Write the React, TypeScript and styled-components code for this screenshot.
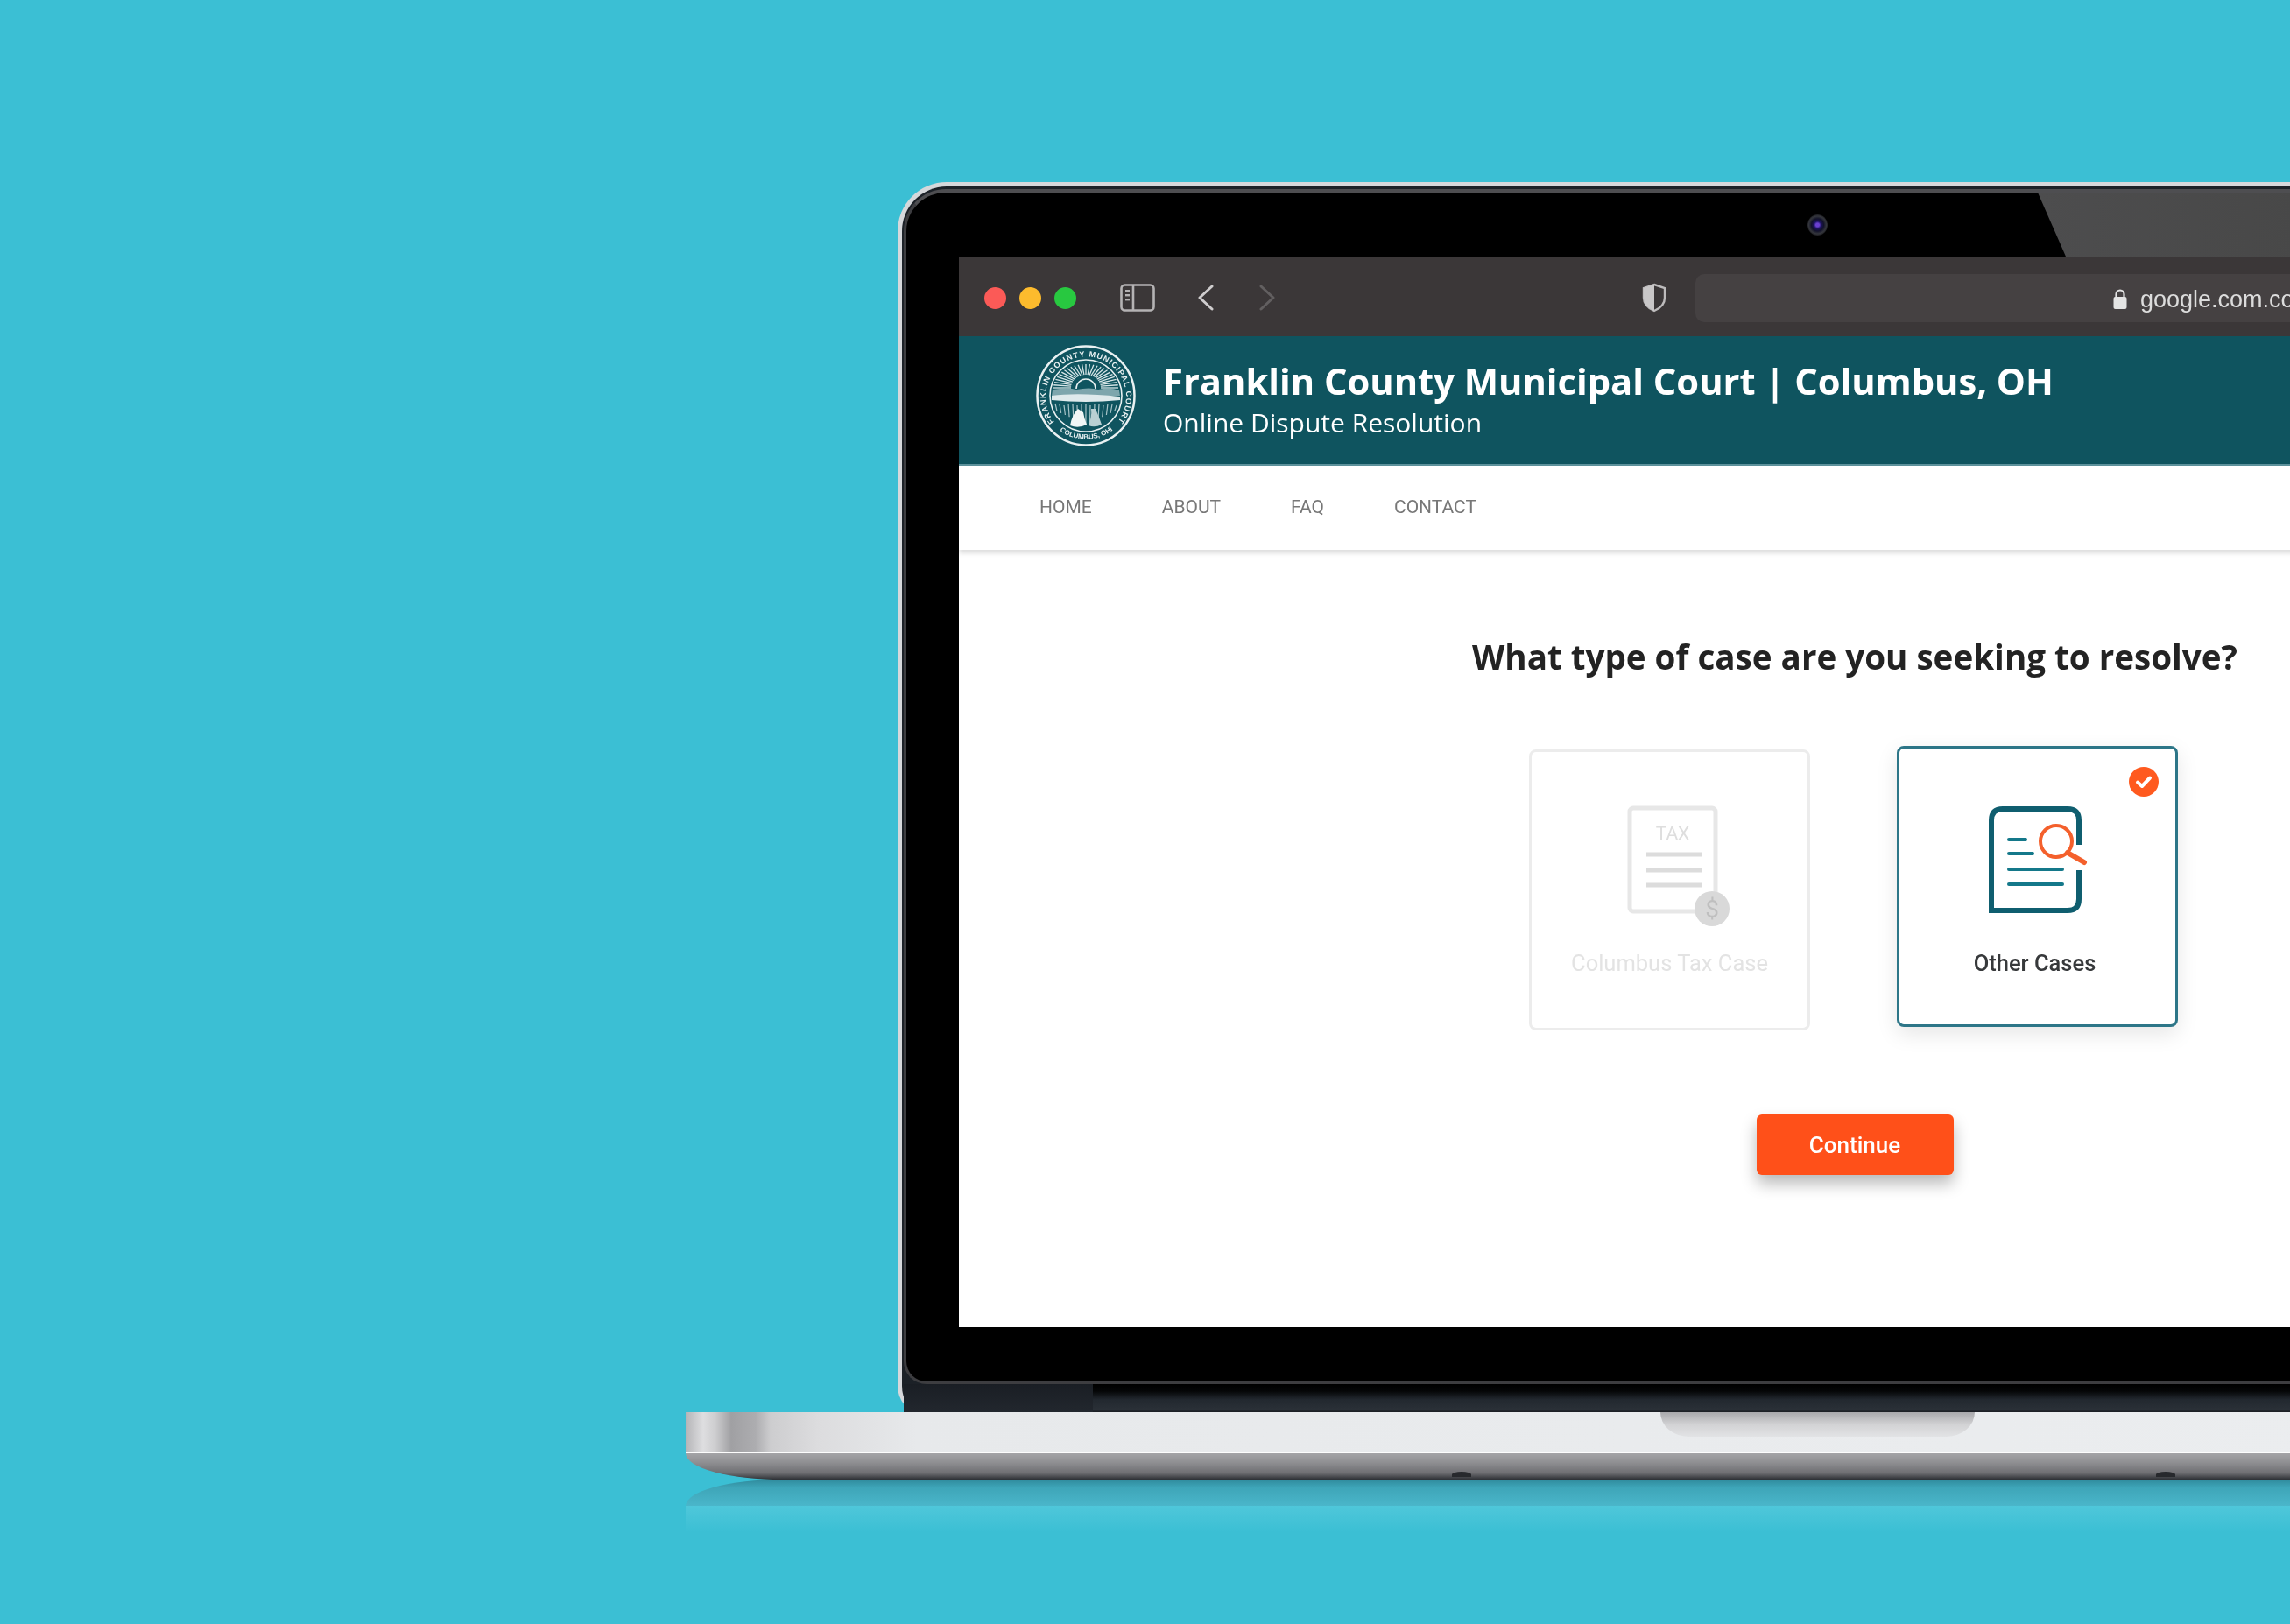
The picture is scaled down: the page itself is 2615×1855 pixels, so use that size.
import React from "react";
import styled, { createGlobalStyle } from "styled-components";

const Global = createGlobalStyle`
  html, body { margin: 0; padding: 0; background: #3bbfd4; }
  * { box-sizing: border-box; }
`;

const Page = styled.main`
  width: 2615px;
  height: 1855px;
  overflow: hidden;
  background: #3bbfd4;
  padding: 208px 0 0 783px;
  display: flex;
  flex-direction: column;
  align-items: flex-start;
`;

const Lid = styled.section`
  flex: none;
  width: 2300px;
  margin-left: 242px;
  background: #1c2127;
  border: solid #d6d8db;
  border-width: 5px 0 0 5px;
  border-radius: 56px 0 0 26px / 56px 0 0 30px;
  padding: 3px 0 0 2px;
  display: flex;
  flex-direction: column;
`;

const Bezel = styled.div`
  position: relative;
  background: #000;
  border: solid #3d3d40;
  border-width: 4px 0 3px 3px;
  border-top-color: #4e4e51;
  border-radius: 48px 0 0 26px;
  padding: 73px 0 62px 60px;
`;

const Wedge = styled.div`
  position: absolute;
  top: 0;
  left: 1292px;
  width: 1000px;
  height: 73px;
  background: linear-gradient(90deg, #4d4d4e, #484848 30%, #434343);
  clip-path: polygon(0 0, 100% 0, 100% 100%, 32px 100%);
`;

const Camera = styled.div`
  position: absolute;
  left: 1029px;
  top: 25px;
  width: 23px;
  height: 24px;
  border-radius: 50%;
  background: radial-gradient(circle, #6a3fd0 0 2px, #1d1464 4px, #12122a 7px, #34363c 10px, #1c1c20 12px);
`;

const Hinge = styled.div`
  height: 32px;
  display: flex;
`;

const HingeLeft = styled.div`
  width: 216px;
  background: linear-gradient(#1a1e24, #22272e);
`;

const HingeRight = styled.div`
  flex: 1;
  background: linear-gradient(#000 0, #050607 25%, #22282f 55%, #2a3037 90%, #1a1d22 100%);
`;

const Screen = styled.div`
  width: 2046px;
  height: 1223px;
  background: #fff;
  display: flex;
  flex-direction: column;
  filter: blur(0.5px);
`;

const Toolbar = styled.header`
  flex: none;
  height: 91px;
  background: #3b3738;
  display: flex;
  align-items: center;
  padding-left: 29px;
`;

const Light = styled.span<{ $c: string }>`
  flex: none;
  width: 25px;
  height: 25px;
  border-radius: 50%;
  margin-right: 15px;
  margin-top: 3px;
  background: ${(p) => p.$c};
`;

const ToolIcon = styled.svg<{ $ml: number }>`
  flex: none;
  margin-left: ${(p) => p.$ml}px;
  margin-top: 3px;
`;

const UrlBar = styled.div`
  flex: none;
  width: 1300px;
  height: 55px;
  margin: 4px 0 0 33px;
  border-radius: 10px;
  background: #454142;
  display: flex;
  align-items: center;
  gap: 15px;
  padding-left: 477px;
  color: #dcdcdc;
  font: 500 27px "Liberation Sans", Arial, sans-serif;
`;

const UrlText = styled.span`
  padding-top: 3px;
  white-space: nowrap;
`;

const Banner = styled.div`
  flex: none;
  height: 148px;
  background: #0f545f;
  border-bottom: 2px solid #5d929c;
  display: flex;
  align-items: center;
  padding: 0 0 0 88px;
  gap: 31px;
  color: #fff;
  font-family: "Open Sans", "Noto Sans", sans-serif;
`;

const BannerText = styled.div`
  display: flex;
  flex-direction: column;
  padding-bottom: 4px;
`;

const CourtName = styled.div`
  font-size: 41.7px;
  font-weight: 700;
  line-height: 55px;
  white-space: nowrap;
`;

const CourtSub = styled.div`
  font-size: 30px;
  font-weight: 500;
  line-height: 42px;
  white-space: nowrap;
`;

const Nav = styled.nav`
  flex: none;
  height: 96px;
  display: flex;
  align-items: center;
  gap: 80px;
  padding: 0 0 2px 92px;
  box-shadow: 0 4px 5px rgba(0, 0, 0, 0.13);
  position: relative;
`;

const NavLink = styled.a`
  font: 400 21px Roboto, "Liberation Sans", sans-serif;
  color: #777;
`;

const Body = styled.div`
  flex: 1;
  display: flex;
  flex-direction: column;
  align-items: center;
  padding-top: 94px;
`;

const Question = styled.h1`
  margin: 0 0 74px;
  font: 700 38.6px/56px "Open Sans", "Noto Sans", sans-serif;
  color: #232323;
  white-space: nowrap;
`;

const Choices = styled.div`
  display: flex;
  align-items: flex-start;
  gap: 99px;
  margin-right: 3px;
`;

const Card = styled.button<{ $on?: boolean }>`
  position: relative;
  width: 321px;
  height: 321px;
  margin-top: ${(p) => (p.$on ? 0 : 4)}px;
  background: #fff;
  border: 3px solid ${(p) => (p.$on ? "#2d7688" : "#ececec")};
  border-radius: 8px;
  box-shadow: ${(p) => (p.$on ? "0 8px 24px rgba(0,0,0,.1)" : "none")};
  display: flex;
  flex-direction: column;
  align-items: center;
  padding: ${(p) => (p.$on ? 65 : 61)}px 0 0;
  font-family: Roboto, "Liberation Sans", sans-serif;
`;

const CardLabel = styled.span<{ $on?: boolean }>`
  position: absolute;
  left: 0;
  right: ${(p) => (p.$on ? 6 : 0)}px;
  top: ${(p) => (p.$on ? 229 : 225)}px;
  text-align: center;
  font-size: 25.5px;
  font-weight: ${(p) => (p.$on ? 500 : 400)};
  line-height: 32px;
  color: ${(p) => (p.$on ? "#37393b" : "#e3e3e3")};
`;

const Badge = styled.svg`
  position: absolute;
  top: 20px;
  right: 18px;
`;

const Continue = styled.button`
  margin-top: 96px;
  width: 225px;
  height: 69px;
  border: 0;
  border-radius: 6px;
  background: #ff5019;
  color: #fff;
  font: 500 26px Roboto, "Liberation Sans", sans-serif;
  box-shadow: 0 10px 18px rgba(0, 0, 0, 0.28);
`;

const Base = styled.div`
  flex: none;
  width: 2300px;
  height: 47px;
  display: flex;
  padding-left: 1113px;
  border-bottom: 2px solid #fdfdfd;
  background: linear-gradient(
    90deg,
    #b4b4b7 0,
    #dedee0 20px,
    #cdcdcf 34px,
    #a0a0a3 52px,
    #adadb0 80px,
    #cdcdcf 97px,
    #dcdcde 150px,
    #e7e9eb 264px,
    #eceef0 100%
  );
`;

const Notch = styled.div`
  width: 359px;
  height: 28px;
  border-radius: 0 0 32px 32px / 0 0 28px 28px;
  background: linear-gradient(#a8a8ab, #d2d2d4 50%, #e2e3e5);
`;

const Lip = styled.div`
  position: relative;
  flex: none;
  width: 2300px;
  height: 30px;
  border-radius: 0 0 0 110px / 0 0 0 30px;
  background: linear-gradient(#a4a4a7, #8f8f92 35%, #6e6e72 75%, #2d3035 100%);
`;

const Foot = styled.span<{ $x: number }>`
  position: absolute;
  left: ${(p) => p.$x}px;
  bottom: 3px;
  width: 22px;
  height: 6px;
  border-radius: 50% 50% 0 0;
  background: #27292d;
`;

const ReflectionTop = styled.div`
  flex: none;
  width: 2300px;
  height: 30px;
  border-radius: 110px 0 0 0 / 30px 0 0 0;
  background: linear-gradient(#2f8a9c, #3ea5b8 30%, #4ab6ca 100%);
`;

const ReflectionFade = styled.div`
  flex: none;
  width: 2300px;
  height: 30px;
  background: linear-gradient(#4fc7da, #3bbfd4);
`;

const SealMark = styled.svg`
  flex: none;
  margin-bottom: 10px;
`;

const DocIcon = styled.svg<{ $shift: number }>`
  flex: none;
  margin-left: ${(p) => p.$shift}px;
`;

const Seal = () => (
  <SealMark width="114" height="116" viewBox="-57 -58 114 116">
    <defs>
      <path id="sealTop" d="M -36 30 A 46 46 0 1 1 36 30" />
      <path id="sealBottom" d="M -30 40 A 51 51 0 0 0 30 40" />
    </defs>
    <ellipse cx="0" cy="0" rx="55.5" ry="56.5" fill="none" stroke="#e9f1f2" strokeWidth="2.5" />
    <circle cx="0" cy="0" r="41" fill="none" stroke="#e9f1f2" strokeWidth="1.6" />
    <text fill="#e9f1f2" fontFamily="Liberation Sans, sans-serif" fontWeight="700" fontSize="9" textLength="205">
      <textPath href="#sealTop">FRANKLIN COUNTY MUNICIPAL COURT</textPath>
    </text>
    <text fill="#e9f1f2" fontFamily="Liberation Sans, sans-serif" fontWeight="700" fontSize="8">
      <textPath href="#sealBottom">COLUMBUS, OHIO</textPath>
    </text>
    <g stroke="#d8e6e8" strokeWidth="1.3">
      {Array.from({ length: 27 }).map((_, i) => {
        const a = Math.PI + (i * Math.PI) / 26;
        return (
          <line
            key={i}
            x1={Math.cos(a) * 17}
            y1={-9 + Math.sin(a) * 15}
            x2={Math.cos(a) * 37}
            y2={-9 + Math.sin(a) * 27}
          />
        );
      })}
    </g>
    <path d="M -11 -8 A 11 11 0 0 1 11 -8" fill="none" stroke="#e9f1f2" strokeWidth="1.6" />
    <path d="M -38 -7 Q -20 -10 -11 -7 Q 5 -10 14 -7 Q 28 -10 38 -6 L 39 0 L -39 0 Z" fill="#7ea6ad" />
    <path d="M -39 0 Q -10 -4 39 1 L 39 5 Q 0 9 -39 5 Z" fill="#dfeaec" />
    <g stroke="#a9c5c9" strokeWidth="1.2">
      {Array.from({ length: 15 }).map((_, i) => (
        <line key={i} x1={-35 + i * 5} y1={9 + (i % 3)} x2={-33 + i * 4.7} y2={33 - Math.abs(i - 7) * 2.2} />
      ))}
    </g>
    <path d="M -18 34 Q -16 22 -9 15 L -3 19 Q -2 26 1 33 Q -9 38 -18 34 Z" fill="#f1f6f6" />
    <path d="M 3 34 Q 7 24 6 15 L 11 15 Q 15 24 18 33 Q 10 37 3 34 Z" fill="#b9d0d3" />
  </SealMark>
);

const OtherDoc = () => (
  <DocIcon width="124" height="125" viewBox="0 0 124 125" fill="none" $shift={6}>
    <path
      d="M 106 45 V 17 Q 106 4 93 4 H 19 Q 6 4 6 17 V 120 H 93 Q 106 120 106 107 V 74"
      stroke="#0f5e6f"
      strokeWidth="6"
    />
    <g stroke="#14788a" strokeWidth="4" strokeLinecap="round">
      <line x1="26" y1="39" x2="45" y2="39" />
      <line x1="26" y1="55" x2="53" y2="55" />
      <line x1="26" y1="73" x2="87" y2="73" />
      <line x1="26" y1="90" x2="87" y2="90" />
    </g>
    <circle cx="80" cy="41" r="18" stroke="#f4602c" strokeWidth="4" />
    <line x1="93" y1="54" x2="112" y2="65" stroke="#f4602c" strokeWidth="6" strokeLinecap="round" />
  </DocIcon>
);

const TaxDoc = () => (
  <DocIcon width="124" height="145" viewBox="0 0 124 145" fill="none" $shift={27}>
    <rect x="3" y="3" width="98" height="118" rx="4" stroke="#e7e7e7" strokeWidth="5" />
    <text x="52" y="39" textAnchor="middle" fill="#dedede" fontSize="21" fontFamily="Roboto, sans-serif">
      TAX
    </text>
    <g stroke="#dcdcdc" strokeWidth="5">
      <line x1="22" y1="56" x2="85" y2="56" />
      <line x1="22" y1="74" x2="85" y2="74" />
      <line x1="22" y1="91" x2="85" y2="91" />
    </g>
    <circle cx="97" cy="118" r="20" fill="#d9d9d9" />
    <text x="97" y="128" textAnchor="middle" fill="#bfbfbf" fontSize="28" fontFamily="Roboto, sans-serif">
      $
    </text>
  </DocIcon>
);

export default function App() {
  return (
    <Page>
      <Global />
      <Lid>
        <Bezel>
          <Wedge />
          <Camera />
          <Screen>
            <Toolbar>
              <Light $c="#fb5a57" />
              <Light $c="#fdbb2d" />
              <Light $c="#28c840" />
              <ToolIcon $ml={35} width="40" height="32" viewBox="0 0 40 32" fill="none">
                <rect x="1.5" y="1.5" width="37" height="29" rx="4" stroke="#b5b3b4" strokeWidth="2.6" />
                <line x1="15" y1="2" x2="15" y2="30" stroke="#b5b3b4" strokeWidth="2.6" />
                <g fill="#b5b3b4">
                  <rect x="6" y="7" width="5" height="2.4" />
                  <rect x="6" y="12" width="5" height="2.4" />
                  <rect x="6" y="17" width="5" height="2.4" />
                </g>
              </ToolIcon>
              <ToolIcon $ml={48} width="20" height="30" viewBox="0 0 20 30" fill="none">
                <path d="M 17 2 L 3 15 L 17 28" stroke="#cfcdce" strokeWidth="3" strokeLinecap="round" strokeLinejoin="round" />
              </ToolIcon>
              <ToolIcon $ml={50} width="20" height="30" viewBox="0 0 20 30" fill="none">
                <path d="M 3 2 L 17 15 L 3 28" stroke="#625f60" strokeWidth="3" strokeLinecap="round" strokeLinejoin="round" />
              </ToolIcon>
              <ToolIcon $ml={418} width="28" height="34" viewBox="0 0 28 34" fill="none">
                <path d="M 14 2 L 26 6 V 17 Q 26 27 14 32 Q 2 27 2 17 V 6 Z" stroke="#bdbbbc" strokeWidth="2.4" />
                <path d="M 14 2 L 2 6 V 17 Q 2 27 14 32 Z" fill="#c9c7c8" />
              </ToolIcon>
              <UrlBar>
                <svg width="16" height="24" viewBox="0 0 16 24" fill="none" style={{ flex: "none" }}>
                  <path d="M 3.5 11 V 7 a 4.5 4.5 0 0 1 9 0 V 11" stroke="#e4e4e4" strokeWidth="2.2" />
                  <rect x="0.5" y="10" width="15" height="14" rx="2" fill="#e4e4e4" />
                </svg>
                <UrlText>google.com.co</UrlText>
              </UrlBar>
            </Toolbar>
            <Banner>
              <Seal />
              <BannerText>
                <CourtName>Franklin County Municipal Court | Columbus, OH</CourtName>
                <CourtSub>Online Dispute Resolution</CourtSub>
              </BannerText>
            </Banner>
            <Nav>
              <NavLink>HOME</NavLink>
              <NavLink>ABOUT</NavLink>
              <NavLink>FAQ</NavLink>
              <NavLink>CONTACT</NavLink>
            </Nav>
            <Body>
              <Question>What type of case are you seeking to resolve?</Question>
              <Choices>
                <Card>
                  <TaxDoc />
                  <CardLabel>Columbus Tax Case</CardLabel>
                </Card>
                <Card $on>
                  <Badge width="36" height="36" viewBox="0 0 36 36" fill="none">
                    <circle cx="18" cy="18" r="17" fill="#ff5a1f" />
                    <path d="M 11 18.5 L 16 23 L 25 13.5" stroke="#fff" strokeWidth="4" strokeLinecap="round" strokeLinejoin="round" />
                  </Badge>
                  <OtherDoc />
                  <CardLabel $on>Other Cases</CardLabel>
                </Card>
              </Choices>
              <Continue>Continue</Continue>
            </Body>
          </Screen>
        </Bezel>
        <Hinge>
          <HingeLeft />
          <HingeRight />
        </Hinge>
      </Lid>
      <Base>
        <Notch />
      </Base>
      <Lip>
        <Foot $x={875} />
        <Foot $x={1679} />
      </Lip>
      <ReflectionTop />
      <ReflectionFade />
    </Page>
  );
}
